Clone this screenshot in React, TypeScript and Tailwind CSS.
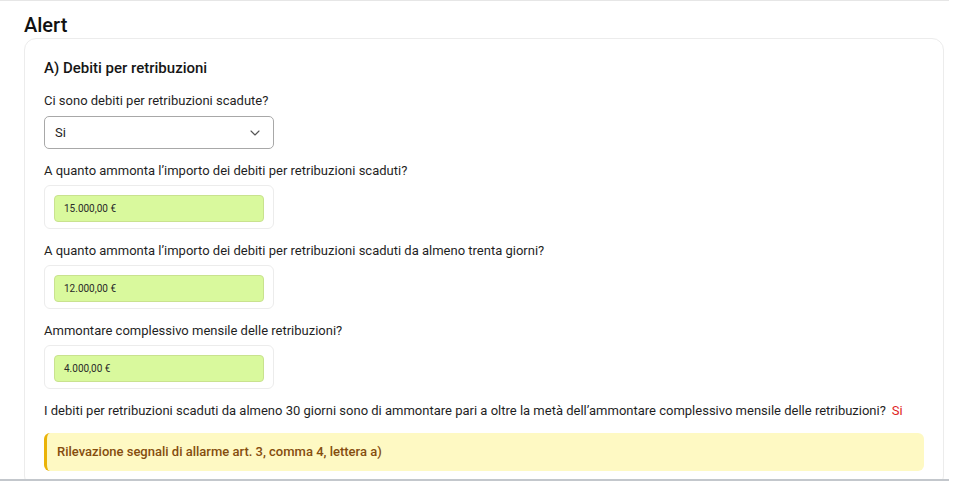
import { ChevronDown } from "lucide-react";

const amounts = [
  {
    label: "A quanto ammonta l’importo dei debiti per retribuzioni scaduti?",
    value: "15.000,00 €",
  },
  {
    label:
      "A quanto ammonta l’importo dei debiti per retribuzioni scaduti da almeno trenta giorni?",
    value: "12.000,00 €",
  },
  {
    label: "Ammontare complessivo mensile delle retribuzioni?",
    value: "4.000,00 €",
  },
];

function AmountField({ label, value }: { label: string; value: string }) {
  return (
    <div className="mt-3">
      <p className="text-[13px] leading-5 text-[#1f1f1f]">{label}</p>
      <div className="mt-1 w-[230px] h-11 rounded-md border border-[#ececec] bg-white px-[9px] py-[9px]">
        <div className="h-[27px] rounded-[4px] border border-[#c9e28f] bg-[#d9f99d] px-[9px] flex items-center text-[10px] text-[#2a2a2a]">
          {value}
        </div>
      </div>
    </div>
  );
}

export default function App() {
  return (
    <div
      className="w-[949px] h-[481px] bg-white border-t border-[#e6e6e6] border-b-2 border-b-[#c3c7cc] pt-[12px] pl-6 pr-[5px] overflow-hidden"
      style={{ fontFamily: "Roboto, 'Noto Sans', sans-serif" }}
    >
      <h1 className="text-[20px] leading-6 font-medium text-[#111]">Alert</h1>

      {/* Debiti per retribuzioni card */}
      <section className="mt-[1px] rounded-xl border border-[#ececec] px-[19px] pt-[19px] pb-4">
        <h2 className="text-[15px] leading-5 font-medium text-[#161616]">
          A) Debiti per retribuzioni
        </h2>

        <p className="mt-[13px] text-[13px] leading-5 text-[#1f1f1f]">
          Ci sono debiti per retribuzioni scadute?
        </p>
        <div className="mt-[5px] w-[230px] h-[33px] rounded-[5px] border border-[#a8a8a8] px-[10px] flex items-center justify-between text-[13px] text-[#1f1f1f]">
          <span>Si</span>
          <ChevronDown className="w-4 h-4 text-[#555]" strokeWidth={1.6} />
        </div>

        {amounts.map((a) => (
          <AmountField key={a.value} label={a.label} value={a.value} />
        ))}

        <p className="mt-3 text-[13px] leading-5 text-[#1f1f1f] whitespace-nowrap">
          I debiti per retribuzioni scaduti da almeno 30 giorni sono di
          ammontare pari a oltre la metà dell’ammontare complessivo mensile
          delle retribuzioni?
          <span className="ml-[6px] text-[#e02424]">Si</span>
        </p>

        <div className="mt-[12px] h-[38px] rounded-md border-l-[3px] border-[#eab308] bg-[#fef9c3] pl-[10px] flex items-center text-[13px] font-medium text-[#854d0e]">
          Rilevazione segnali di allarme art. 3, comma 4, lettera a)
        </div>
      </section>
    </div>
  );
}
